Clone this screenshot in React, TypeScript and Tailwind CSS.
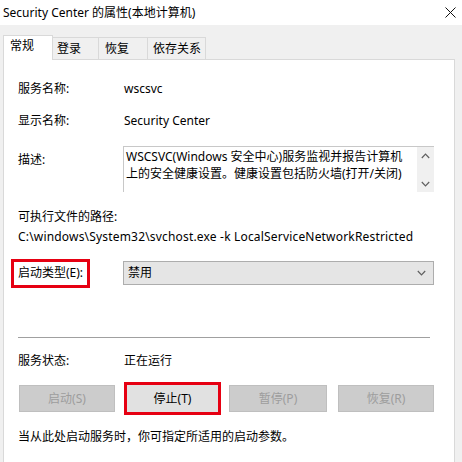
import React from "react";

const FONT = '"Noto Sans", "Noto Sans CJK SC", sans-serif';

function Chevron({ up, className }: { up?: boolean; className?: string }) {
  return (
    <svg width="9" height="6" viewBox="0 0 9 6" className={className}>
      <path
        d={up ? "M0.8 5 L4.5 1.2 L8.2 5" : "M0.8 1 L4.5 4.8 L8.2 1"}
        fill="none"
        stroke="#606060"
        strokeWidth="1.2"
      />
    </svg>
  );
}

export default function App() {
  return (
    <div
      className="w-[462px] h-[462px] overflow-hidden bg-[#f0f0f0] text-[12px] text-black flex flex-col"
      style={{ fontFamily: FONT }}
    >
      {/* Title bar */}
      <div className="h-[25px] bg-white flex items-center justify-between pl-[3px] pr-[6px] shrink-0">
        <span className="leading-[16px] whitespace-nowrap">Security Center 的属性(本地计算机)</span>
        <svg width="11" height="11" viewBox="0 0 11 11">
          <path d="M0.5 0.5 L10.5 10.5 M10.5 0.5 L0.5 10.5" stroke="#111" strokeWidth="1" fill="none" />
        </svg>
      </div>

      {/* Tabs */}
      <div className="h-[34px] pl-[3px] flex items-end shrink-0">
        <div className="relative z-10 h-[25px] w-[50px] -mb-px bg-white border border-b-0 border-[#d9d9d9] pl-[6px] pt-[2px] leading-[16px]">
          常规
        </div>
        <div className="h-[22px] w-[46px] bg-[#f0f0f0] border border-l-0 border-b-0 border-[#d9d9d9] pl-[4px] pt-[3px] leading-[16px]">
          登录
        </div>
        <div className="h-[22px] w-[49px] bg-[#f0f0f0] border border-l-0 border-b-0 border-[#d9d9d9] pl-[6px] pt-[3px] leading-[16px]">
          恢复
        </div>
        <div className="h-[22px] w-[58px] bg-[#f0f0f0] border border-l-0 border-b-0 border-[#d9d9d9] pl-[5px] pt-[3px] leading-[16px]">
          依存关系
        </div>
      </div>

      {/* Panel */}
      <div className="ml-[3px] w-[452px] flex-1 bg-white border border-b-0 border-[#d9d9d9] pl-[14px] flex flex-col">
        <div className="mt-[19px] h-[20px] flex items-center">
          <span className="w-[106px]">服务名称:</span>
          <span>wscsvc</span>
        </div>
        <div className="mt-[12px] h-[20px] flex items-center">
          <span className="w-[106px]">显示名称:</span>
          <span>Security Center</span>
        </div>
        <div className="mt-[15px] h-[46px] flex items-start">
          <span className="w-[105px] pt-[6px] leading-[16px]">描述:</span>
          <div className="w-[311px] h-[46px] border-t border-l border-[#c8c8c8] flex">
            <div className="flex-1 pl-[2px] pt-[1px] leading-[17px] whitespace-nowrap overflow-hidden">
              <div>WSCSVC(Windows 安全中心)服务监视并报告计算机</div>
              <div>上的安全健康设置。健康设置包括防火墙(打开/关闭)</div>
            </div>
            <div className="w-[17px] bg-[#f0f0f0] flex flex-col items-center justify-between pt-[6px] pb-[5px]">
              <Chevron up />
              <Chevron />
            </div>
          </div>
        </div>
        <div className="mt-[15px] h-[20px] flex items-center">可执行文件的路径:</div>
        <div className="h-[20px] flex items-center whitespace-nowrap tracking-[0.18px]">
          C:\windows\System32\svchost.exe -k LocalServiceNetworkRestricted
        </div>
        <div className="mt-[14px] h-[24px] flex items-center">
          <div className="-ml-[7px] w-[79px] h-[29px] border-[3px] border-[#e60012] pl-[4px] flex items-center whitespace-nowrap">
            启动类型(E):
          </div>
          <div className="ml-[33px] w-[311px] h-[24px] bg-[#e5e5e5] border border-[#adadad] flex items-center justify-between pl-[4px] pr-[7px]">
            <span>禁用</span>
            <Chevron />
          </div>
        </div>
        <div className="mt-[52px] h-px w-[412px] bg-[#a0a0a0]" />
        <div className="mt-[13px] h-[20px] flex items-center">
          <span className="w-[106px]">服务状态:</span>
          <span>正在运行</span>
        </div>
        <div className="mt-[14px] h-[27px] flex items-center">
          <div className="ml-[1px] w-[96px] h-[27px] bg-[#cccccc] border border-[#bfbfbf] text-[#9d9d9d] flex items-center justify-center">
            启动(S)
          </div>
          <div className="ml-[9px] w-[97px] h-[33px] shrink-0 border-[3px] border-[#e60012] bg-[#e1e1e1] flex items-center justify-center">
            停止(T)
          </div>
          <div className="ml-[8px] w-[98px] h-[27px] bg-[#cccccc] border border-[#bfbfbf] text-[#9d9d9d] flex items-center justify-center">
            暂停(P)
          </div>
          <div className="ml-[11px] w-[96px] h-[27px] bg-[#cccccc] border border-[#bfbfbf] text-[#9d9d9d] flex items-center justify-center">
            恢复(R)
          </div>
        </div>
        <div className="mt-[15px] h-[20px] flex items-center whitespace-nowrap">
          当从此处启动服务时，你可指定所适用的启动参数。
        </div>
      </div>
    </div>
  );
}
